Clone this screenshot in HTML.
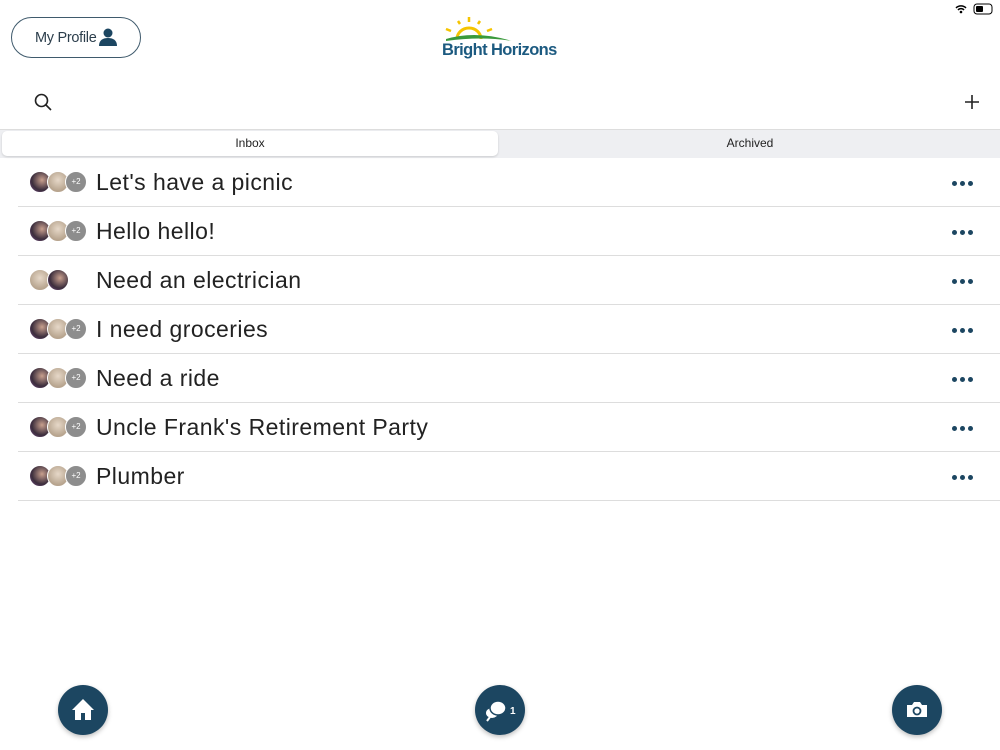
<!DOCTYPE html><html><head><meta charset="utf-8"><style>
*{margin:0;padding:0;box-sizing:border-box}
body{width:1000px;height:750px;background:#fff;font-family:"Liberation Sans",sans-serif;position:relative;overflow:hidden;color:#222}
.abs{position:absolute}
.prof{left:11px;top:17px;width:130px;height:41px;border:1.5px solid #3f5a6c;border-radius:21px;font-size:14.5px;color:#2c3e4c;padding:12px 0 0 23px;letter-spacing:-0.3px}
.tabs{left:0;top:129px;width:1000px;height:29px;background:#eeeff2;border-top:1px solid #ddd}
.inbox{left:2px;top:131px;width:496px;height:25px;background:#fff;border-radius:5px;box-shadow:0 1px 2px rgba(0,0,0,.15);font-size:12px;text-align:center;line-height:25px}
.arch{left:500px;top:131px;width:500px;height:25px;font-size:12px;text-align:center;line-height:25px}
.row{left:18px;width:982px;height:49px;border-bottom:1px solid #ddd}
.row .t{position:absolute;left:78px;top:11px;font-size:23px;color:#222;letter-spacing:0.45px}
.av{position:absolute;top:13px;width:22px;height:22px;border-radius:50%;border:1px solid #fff}
.a1{background:radial-gradient(circle at 60% 40%,#c9a08e,#3b2d3c 60%,#7a4e8a)}
.a2{background:radial-gradient(circle at 50% 40%,#e6d8c8,#b7a48e 70%)}
.a3{background:#8d8d8d;color:#fff;font-size:8px;text-align:center;line-height:20px}
.dots{position:absolute;right:27px;top:23px;display:flex;gap:3px}
.dots i{width:5px;height:5px;border-radius:50%;background:#1c4661;display:block}
.btn{width:50px;height:50px;border-radius:50%;background:#1c4661;top:685px;box-shadow:0 2px 5px rgba(0,0,0,.25)}
</style></head><body>
<div class="abs prof">My Profile <svg width="18" height="18" viewBox="0 0 18 18" style="position:absolute;left:87px;top:10px"><circle cx="9" cy="5" r="4.5" fill="#1c4661"/><path d="M0 18c0-6 4-8 9-8s9 2 9 8z" fill="#1c4661"/></svg></div>
<svg class="abs" style="left:440px;top:14px" width="122" height="46" viewBox="0 0 122 46">
<path d="M17 25a12 11 0 0 1 24 0" fill="none" stroke="#f5c400" stroke-width="3"/>
<g stroke="#f5c400" stroke-width="2.5"><line x1="29" y1="3" x2="29" y2="8"/><line x1="18" y1="7" x2="20" y2="10"/><line x1="40" y1="7" x2="38" y2="10"/><line x1="6" y1="15" x2="11" y2="17"/><line x1="52" y1="15" x2="47" y2="17"/></g>
<path d="M6 25q30-9 66 2q-30-5-66 0z" fill="#3a9a3c"/>
<text x="2" y="41" font-family="Liberation Sans" font-weight="bold" font-size="16.5" fill="#1c5a80" letter-spacing="-0.6">Bright Horizons</text>
<text x="114" y="41" font-size="8" fill="#1c5a80">.</text></svg>
<svg class="abs" style="right:4px;top:3px" width="44" height="12"><path d="M4 5a7 7 0 0 1 10 0M6 7a4 4 0 0 1 6 0" stroke="#000" stroke-width="1.5" fill="none"/><circle cx="9" cy="9" r="1.3"/><rect x="22" y="1" width="18" height="10" rx="3" fill="none" stroke="#000"/><rect x="24" y="3" width="7" height="6" rx="1"/></svg>
<svg class="abs" style="left:34px;top:93px" width="18" height="18"><circle cx="7.5" cy="7.5" r="6" fill="none" stroke="#222" stroke-width="1.6"/><line x1="12" y1="12" x2="17" y2="17" stroke="#222" stroke-width="1.6"/></svg>
<svg class="abs" style="left:964px;top:94px" width="16" height="16"><path d="M8 1v14M1 8h14" stroke="#222" stroke-width="1.6"/></svg>
<div class="abs tabs"></div><div class="abs inbox">Inbox</div><div class="abs arch">Archived</div>

<div class="abs row" style="top:158px"><div class="av a1" style="left:11px"></div><div class="av a2" style="left:29px"></div><div class="av a3" style="left:47px">+2</div><div class="t">Let's have a picnic</div><div class="dots"><i></i><i></i><i></i></div></div>
<div class="abs row" style="top:207px"><div class="av a1" style="left:11px"></div><div class="av a2" style="left:29px"></div><div class="av a3" style="left:47px">+2</div><div class="t">Hello hello!</div><div class="dots"><i></i><i></i><i></i></div></div>
<div class="abs row" style="top:256px"><div class="av a2" style="left:11px"></div><div class="av a1" style="left:29px"></div><div class="t">Need an electrician</div><div class="dots"><i></i><i></i><i></i></div></div>
<div class="abs row" style="top:305px"><div class="av a1" style="left:11px"></div><div class="av a2" style="left:29px"></div><div class="av a3" style="left:47px">+2</div><div class="t">I need groceries</div><div class="dots"><i></i><i></i><i></i></div></div>
<div class="abs row" style="top:354px"><div class="av a1" style="left:11px"></div><div class="av a2" style="left:29px"></div><div class="av a3" style="left:47px">+2</div><div class="t">Need a ride</div><div class="dots"><i></i><i></i><i></i></div></div>
<div class="abs row" style="top:403px"><div class="av a1" style="left:11px"></div><div class="av a2" style="left:29px"></div><div class="av a3" style="left:47px">+2</div><div class="t">Uncle Frank's Retirement Party</div><div class="dots"><i></i><i></i><i></i></div></div>
<div class="abs row" style="top:452px"><div class="av a1" style="left:11px"></div><div class="av a2" style="left:29px"></div><div class="av a3" style="left:47px">+2</div><div class="t">Plumber</div><div class="dots"><i></i><i></i><i></i></div></div>

<div class="abs btn" style="left:58px"><svg width="50" height="50"><path d="M25 14l-11 11h3v10h6v-7h4v7h6v-10h3z" fill="#fff"/></svg></div>
<div class="abs btn" style="left:475px"><svg width="50" height="50"><ellipse cx="17" cy="28" rx="6" ry="5" fill="#fff"/><path d="M12 36l3-4" stroke="#fff" stroke-width="2"/><ellipse cx="23" cy="23" rx="8" ry="7" fill="#fff" stroke="#1c4661" stroke-width="1.5"/><text x="35" y="29" font-size="10" fill="#fff" font-family="Liberation Sans" font-weight="bold">1</text></svg></div>
<div class="abs btn" style="left:892px"><svg width="50" height="50"><path d="M15 20h5l2-3h6l2 3h5v12h-20z" fill="#fff"/><circle cx="25" cy="26" r="3.5" fill="none" stroke="#1c4661" stroke-width="1.8"/></svg></div>
</body></html>
